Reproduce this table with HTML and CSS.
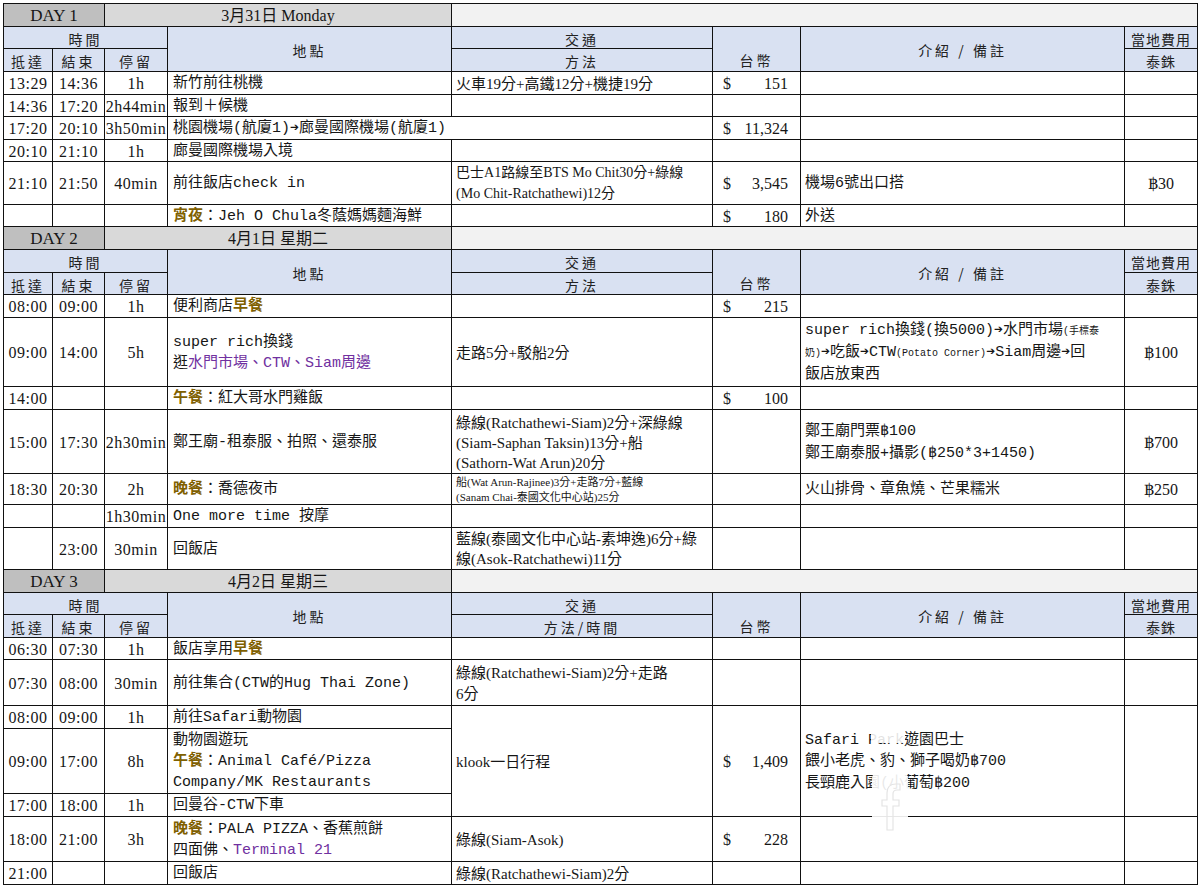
FILE: index.html
```html
<!DOCTYPE html>
<html lang="zh-Hant">
<head>
<meta charset="utf-8">
<title>曼谷行程</title>
<link rel="stylesheet" href="styles.css">
</head>
<body>
<div class="sheet">
<table class="plan">
<colgroup>
<col class="c1"><col class="c2"><col class="c3"><col class="c4"><col class="c5"><col class="c6"><col class="c7"><col class="c8">
</colgroup>
<tbody>
<!-- DAY 1 -->
<tr class="h23">
  <td colspan="2" class="dayno">DAY 1</td>
  <td colspan="2" class="date">3月31日 Monday</td>
  <td colspan="4" class="dayrest"></td>
</tr>
<tr class="h22 hd">
  <td colspan="3">時間</td>
  <td rowspan="2">地點</td>
  <td>交通</td>
  <td rowspan="2" class="hbot">台幣</td>
  <td rowspan="2">介紹 / 備註</td>
  <td class="hsm">當地費用</td>
</tr>
<tr class="h23 hd">
  <td>抵達</td><td>結束</td><td>停留</td><td>方法</td><td class="hsm">泰銖</td>
</tr>
<tr class="h23">
  <td class="t">13:29</td><td class="t">14:36</td><td class="t">1h</td>
  <td class="pl">新竹前往桃機</td>
  <td class="mv">火車19分+高鐵12分+機捷19分</td>
  <td class="twd"><div class="amt"><span>$</span><span>151</span></div></td>
  <td class="note"></td><td class="thb"></td>
</tr>
<tr class="h22">
  <td class="t">14:36</td><td class="t">17:20</td><td class="t">2h44min</td>
  <td class="pl">報到＋候機</td>
  <td class="mv"></td><td class="twd"></td><td class="note"></td><td class="thb"></td>
</tr>
<tr class="h23">
  <td class="t">17:20</td><td class="t">20:10</td><td class="t">3h50min</td>
  <td class="pl" colspan="2">桃園機場(航廈1)➔廊曼國際機場(航廈1)</td>
  <td class="twd"><div class="amt"><span>$</span><span>11,324</span></div></td>
  <td class="note"></td><td class="thb"></td>
</tr>
<tr class="h22">
  <td class="t">20:10</td><td class="t">21:10</td><td class="t">1h</td>
  <td class="pl">廊曼國際機場入境</td>
  <td class="mv"></td><td class="twd"></td><td class="note"></td><td class="thb"></td>
</tr>
<tr class="h43">
  <td class="t">21:10</td><td class="t">21:50</td><td class="t">40min</td>
  <td class="pl">前往飯店check in</td>
  <td class="mv sm14 pt1">巴士A1路線至BTS Mo Chit30分+綠線<br>(Mo Chit-Ratchathewi)12分</td>
  <td class="twd"><div class="amt"><span>$</span><span>3,545</span></div></td>
  <td class="note">機場6號出口搭</td><td class="thb">฿30</td>
</tr>
<tr class="h22">
  <td class="t"></td><td class="t"></td><td class="t"></td>
  <td class="pl"><span class="meal">宵夜</span>：Jeh O Chula冬蔭媽媽麵海鮮</td>
  <td class="mv"></td>
  <td class="twd"><div class="amt"><span>$</span><span>180</span></div></td>
  <td class="note">外送</td><td class="thb"></td>
</tr>

<!-- DAY 2 -->
<tr class="h23">
  <td colspan="2" class="dayno">DAY 2</td>
  <td colspan="2" class="date">4月1日 星期二</td>
  <td colspan="4" class="dayrest"></td>
</tr>
<tr class="h23 hd">
  <td colspan="3">時間</td>
  <td rowspan="2">地點</td>
  <td>交通</td>
  <td rowspan="2" class="hbot">台幣</td>
  <td rowspan="2">介紹 / 備註</td>
  <td class="hsm">當地費用</td>
</tr>
<tr class="h22 hd">
  <td>抵達</td><td>結束</td><td>停留</td><td>方法</td><td class="hsm">泰銖</td>
</tr>
<tr class="h23">
  <td class="t">08:00</td><td class="t">09:00</td><td class="t">1h</td>
  <td class="pl">便利商店<span class="meal">早餐</span></td>
  <td class="mv"></td>
  <td class="twd"><div class="amt"><span>$</span><span>215</span></div></td>
  <td class="note"></td><td class="thb"></td>
</tr>
<tr class="h69">
  <td class="t">09:00</td><td class="t">14:00</td><td class="t">5h</td>
  <td class="pl lh22">super rich換錢<br>逛<span class="pu">水門市場、CTW、Siam周邊</span></td>
  <td class="mv">走路5分+駁船2分</td>
  <td class="twd"></td>
  <td class="note lh23">super rich換錢(換5000)➔水門市場<span class="tiny">(手標泰</span><br><span class="tiny">奶)</span>➔吃飯➔CTW<span class="tiny">(Potato Corner)</span>➔Siam周邊➔回<br>飯店放東西</td>
  <td class="thb">฿100</td>
</tr>
<tr class="h23">
  <td class="t">14:00</td><td class="t"></td><td class="t"></td>
  <td class="pl"><span class="meal">午餐</span>：紅大哥水門雞飯</td>
  <td class="mv"></td>
  <td class="twd"><div class="amt"><span>$</span><span>100</span></div></td>
  <td class="note"></td><td class="thb"></td>
</tr>
<tr class="h64">
  <td class="t">15:00</td><td class="t">17:30</td><td class="t">2h30min</td>
  <td class="pl">鄭王廟-租泰服、拍照、還泰服</td>
  <td class="mv lh20">綠線(Ratchathewi-Siam)2分+深綠線<br>(Siam-Saphan Taksin)13分+船<br>(Sathorn-Wat Arun)20分</td>
  <td class="twd"></td>
  <td class="note lh22">鄭王廟門票฿100<br>鄭王廟泰服+攝影(฿250*3+1450)</td>
  <td class="thb">฿700</td>
</tr>
<tr class="h31">
  <td class="t">18:30</td><td class="t">20:30</td><td class="t">2h</td>
  <td class="pl"><span class="meal">晚餐</span>：喬德夜市</td>
  <td class="mv sm11 pt1">船(Wat Arun-Rajinee)3分+走路7分+藍線<br>(Sanam Chai-泰國文化中心站)25分</td>
  <td class="twd"></td>
  <td class="note">火山排骨、章魚燒、芒果糯米</td>
  <td class="thb">฿250</td>
</tr>
<tr class="h23">
  <td class="t"></td><td class="t"></td><td class="t">1h30min</td>
  <td class="pl">One more time 按摩</td>
  <td class="mv"></td><td class="twd"></td><td class="note"></td><td class="thb"></td>
</tr>
<tr class="h42">
  <td class="t"></td><td class="t">23:00</td><td class="t">30min</td>
  <td class="pl">回飯店</td>
  <td class="mv lh20 pt1">藍線(泰國文化中心站-素坤逸)6分+綠<br>線(Asok-Ratchathewi)11分</td>
  <td class="twd"></td><td class="note"></td><td class="thb"></td>
</tr>

<!-- DAY 3 -->
<tr class="h23">
  <td colspan="2" class="dayno">DAY 3</td>
  <td colspan="2" class="date">4月2日 星期三</td>
  <td colspan="4" class="dayrest"></td>
</tr>
<tr class="h22 hd">
  <td colspan="3">時間</td>
  <td rowspan="2">地點</td>
  <td>交通</td>
  <td rowspan="2" class="hbot">台幣</td>
  <td rowspan="2">介紹 / 備註</td>
  <td class="hsm">當地費用</td>
</tr>
<tr class="h23 hd">
  <td>抵達</td><td>結束</td><td>停留</td><td>方法/時間</td><td class="hsm">泰銖</td>
</tr>
<tr class="h22">
  <td class="t">06:30</td><td class="t">07:30</td><td class="t">1h</td>
  <td class="pl">飯店享用<span class="meal">早餐</span></td>
  <td class="mv"></td><td class="twd"></td><td class="note"></td><td class="thb"></td>
</tr>
<tr class="h46">
  <td class="t">07:30</td><td class="t">08:00</td><td class="t">30min</td>
  <td class="pl">前往集合(CTW的Hug Thai Zone)</td>
  <td class="mv lh21">綠線(Ratchathewi-Siam)2分+走路<br>6分</td>
  <td class="twd"></td><td class="note"></td><td class="thb"></td>
</tr>
<tr class="h23">
  <td class="t">08:00</td><td class="t">09:00</td><td class="t">1h</td>
  <td class="pl">前往Safari動物園</td>
  <td class="mv" rowspan="3">klook一日行程</td>
  <td class="twd" rowspan="3"><div class="amt"><span>$</span><span>1,409</span></div></td>
  <td class="note lh22" rowspan="3">Safari Park遊園巴士<br>餵小老虎、豹、獅子喝奶฿700<br>長頸鹿入園(小葡萄฿200</td>
  <td class="thb" rowspan="3"></td>
</tr>
<tr class="h65">
  <td class="t">09:00</td><td class="t">17:00</td><td class="t">8h</td>
  <td class="pl lh21 pt1">動物園遊玩<br><span class="meal">午餐</span>：Animal Café/Pizza<br>Company/MK Restaurants</td>
</tr>
<tr class="h23">
  <td class="t">17:00</td><td class="t">18:00</td><td class="t">1h</td>
  <td class="pl">回曼谷-CTW下車</td>
</tr>
<tr class="h45">
  <td class="t">18:00</td><td class="t">21:00</td><td class="t">3h</td>
  <td class="pl lh21"><span class="meal">晚餐</span>：PALA PIZZA、香蕉煎餅<br>四面佛、<span class="pu">Terminal 21</span></td>
  <td class="mv">綠線(Siam-Asok)</td>
  <td class="twd"><div class="amt"><span>$</span><span>228</span></div></td>
  <td class="note"></td><td class="thb"></td>
</tr>
<tr class="h23">
  <td class="t">21:00</td><td class="t"></td><td class="t"></td>
  <td class="pl">回飯店</td>
  <td class="mv">綠線(Ratchathewi-Siam)2分</td>
  <td class="twd"></td><td class="note"></td><td class="thb"></td>
</tr>
</tbody>
</table>

<div class="wm" aria-hidden="true">
  <svg width="40" height="124" viewBox="0 0 40 124">
    <rect x="1" y="1" width="34" height="32" rx="3" fill="#fff" fill-opacity="0.88"/>
    <rect x="2" y="64" width="36" height="58" rx="4" fill="#fff" fill-opacity="0.9"/>
    <path d="M23 120 V96 H29 V90 H23 V84 C23 81 24 80 27 80 H30 V74 H26 C20 74 17 77 17 83 V90 H12 V96 H17 V120 Z" fill="none" stroke="#e4e4e4" stroke-width="1.2"/>
  </svg>
</div>
</div>
</body>
</html>
```

FILE: styles.css
```css
* { box-sizing: border-box; }
html, body { margin: 0; padding: 0; background: #fff; }
body {
  font-family: "Liberation Serif", "Noto Sans CJK TC", serif;
  color: #161616;
}
.sheet {
  position: relative;
  width: 1199px;
  height: 885px;
  padding: 3px 0 0 3px;
  overflow: hidden;
}
.plan {
  border-collapse: collapse;
  table-layout: fixed;
  width: 1195px;
}
.c1 { width: 49px; }
.c2 { width: 52px; }
.c3 { width: 63px; }
.c4 { width: 284px; }
.c5 { width: 261px; }
.c6 { width: 88px; }
.c7 { width: 324px; }
.c8 { width: 73px; }

.plan td {
  border: 1px solid #111;
  padding: 2px 4px 0;
  overflow: hidden;
  white-space: nowrap;
  font-size: 15px;
  line-height: 18px;
  vertical-align: middle;
}

.h22 { height: 22px; }
.h23 { height: 23px; }
.h31 { height: 31px; }
.h42 { height: 42px; }
.h43 { height: 43px; }
.h45 { height: 45px; }
.h46 { height: 46px; }
.h64 { height: 64px; }
.h65 { height: 65px; }
.h69 { height: 69px; }

/* day title row */
.plan td.dayno {
  background: #bfbfbf;
  text-align: center;
  font-family: "Liberation Serif", serif;
  font-size: 17px;
}
.plan td.date {
  background: #d9d9d9;
  text-align: center;
  font-family: "Liberation Serif", "Noto Sans CJK TC", serif;
  font-size: 16px;
}
.plan td.dayrest { background: #f2f2f2; }

/* header rows */
.hd td {
  background: #d9e1f2;
  text-align: center;
  font-family: "Noto Sans CJK TC", sans-serif;
  font-size: 14px;
  letter-spacing: 3px;
  color: #222;
}
.plan .hd td.hbot { vertical-align: bottom; padding-bottom: 2px; }
.plan .hd td.hsm { letter-spacing: 1px; padding-left: 0; padding-right: 0; }

/* body cells */
.plan td.t {
  font-family: "Liberation Serif", serif;
  font-size: 16px;
  letter-spacing: 0.5px;
  text-align: center;
  padding-left: 0;
  padding-right: 0;
}
.plan td.pl {
  font-family: "Liberation Mono", "Noto Sans CJK TC", monospace;
  font-size: 15px;
  padding-left: 5px;
}
.plan td.mv {
  font-family: "Liberation Serif", "Noto Sans CJK TC", serif;
  font-size: 15px;
  padding-left: 4px;
}
.plan td.twd {
  font-family: "Liberation Serif", serif;
  font-size: 16px;
  padding-left: 10px;
  padding-right: 12px;
}
.amt { display: flex; justify-content: space-between; }
.plan td.note {
  font-family: "Liberation Mono", "Noto Sans CJK TC", monospace;
  font-size: 15px;
  padding-left: 4px;
}
.plan td.thb {
  font-family: "Liberation Serif", "DejaVu Serif", serif;
  font-size: 16px;
  text-align: center;
}

.plan td.sm14 { font-size: 14px; line-height: 20.5px; }
.plan td.sm11 { font-size: 11px; line-height: 14.5px; }
.plan td.lh20 { line-height: 20px; }
.plan td.lh21 { line-height: 21px; }
.plan td.lh22 { line-height: 21.5px; }
.plan td.lh23 { line-height: 22px; }
.plan td.pt1 { padding-top: 1px; }

.tiny { font-size: 10px; line-height: 0; }
.meal { color: #7f6000; font-weight: bold; }
.pu { color: #7030a0; }

.wm {
  position: absolute;
  left: 870px;
  top: 710px;
  width: 40px;
  height: 124px;
  pointer-events: none;
}
```
